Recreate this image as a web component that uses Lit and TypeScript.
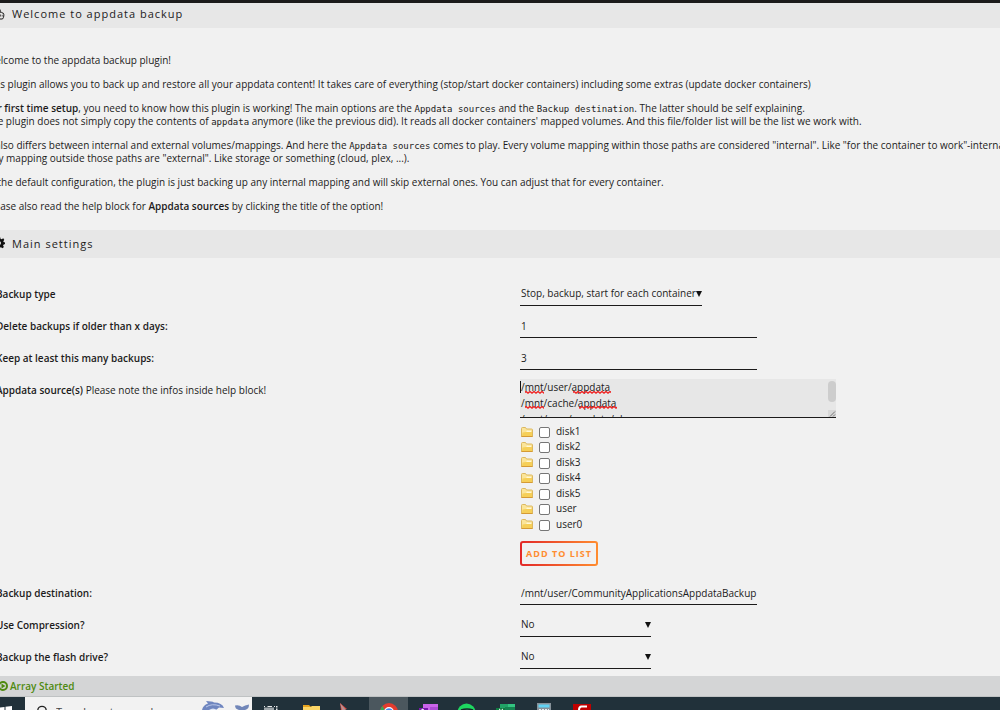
import { LitElement, html, svg, css } from "lit";
import { customElement } from "lit/decorators.js";

const FOLDERS = ["disk1", "disk2", "disk3", "disk4", "disk5", "user", "user0"];

const folderIcon = html`<svg class="folder" width="12" height="10" viewBox="0 0 12 10" aria-hidden="true">
  <path d="M.5 9.5V1.5Q.5.5 1.5.5H4.5L5.5 2H10.5Q11.5 2 11.5 3V9.5Z" fill="#fbe59a" stroke="#dcb85f" />
  <path d="M1 9L1.5 5.5L5 5L7 3.5H11V9Z" fill="#f6cf58" />
  <path d="M6 3.5H10.5V5H5Z" fill="#fff8d8" />
  <path d="M.5 9.5H11.5" stroke="#d59a35" />
</svg>`;

const thumbIcon = html`<svg width="12" height="12" viewBox="0 0 12 12" fill="none" stroke="#1c1b1b" aria-hidden="true">
  <path d="M3 5.5L5.5 3.5V1.5Q6.5.3 7.2 2V4.3Q8.500 3.900 9 4.800Q10.600 4.800 10.800 6.200V8Q10.500 10 9.500 11H5Q3.500 9 3 5.500Z" />
  <path d="M7.500 6.500V8.500M9.200 6.800V8.500" stroke-width=".7" />
</svg>`;

const gearIcon = html`<svg width="12" height="12" viewBox="0 0 11 11" aria-hidden="true">
  <path d="M4.500 0h2l.400 1.600 1 .400L9.400 1.200l.900 1.400L9.500 4l.200.600L11 5v1.500L9.600 7l-.400.800.800 1.400L8.700 10.200 7.300 9.400 6.500 9.600 6.200 11H4.500L4.200 9.500 3 9 1.600 9.900.700 8.700 1.500 7.300 0 6.500V4.600L1.500 4.200 2 3 1.200 1.600 2.500.800 3.900 1.600Z" fill="#111" />
  <circle cx="5.500" cy="5.500" r="1.800" fill="#e7e7e7" />
</svg>`;

const TASKS: { name: string; active?: boolean; art: unknown }[] = [
  { name: "Task View", art: svg`<path d="M12 10.500H22V13H12Z" fill="#9ea6aa"/><path d="M12.500 9V10M15.500 9.500H20M22.500 9V10" stroke="#e8eaeb" fill="none"/><path d="M24 9h1.500v1.500H24zM24 11.500h1.500V13H24z" fill="#e8eaeb"/>` },
  { name: "File Explorer", art: svg`<path d="M12 8H18L19.500 9.500H28V13H12Z" fill="#e6a21d"/><path d="M12 10H20L21 9H29V13H12Z" fill="#fbd566"/>` },
  { name: "Pointer tool", art: svg`<path d="M10 6L17 12 14 13H11Z" fill="#d9453e"/><path d="M10 6L16 13H12Z" fill="#aab2b5" opacity=".7"/>` },
  { name: "Chrome", active: true, art: svg`<circle cx="20" cy="15" r="9" fill="#e33b2e"/><path d="M11 14Q12 10 13.500 9L17 15H11Z" fill="#3ba655"/><circle cx="20" cy="15" r="5" fill="#fff"/><circle cx="20" cy="15" r="3.800" fill="#4384ef"/>` },
  { name: "OneNote", art: svg`<path d="M15 7H30V13H15Z" fill="#ca64ea"/><path d="M22 10H30V13H22Z" fill="#ad4bd5"/><path d="M11 11H20V13H11Z" fill="#7719aa"/><path d="M14 13v-1l2 1" stroke="#fff" fill="none"/>` },
  { name: "Spotify", art: svg`<circle cx="19.500" cy="15.500" r="9" fill="#1ed760"/><path d="M14 13Q20 11 26 13" stroke="#17232a" stroke-width="1.500" fill="none"/>` },
  { name: "Excel", art: svg`<path d="M14 7H22V13H14Z" fill="#21a366"/><path d="M22 7H29V13H22Z" fill="#33c481"/><path d="M19 10H29V13H19Z" fill="#168451"/><path d="M10 11H19V13H10Z" fill="#107c41"/><path d="M13 12l1.500 1M17 12l-1.500 1" stroke="#fff"/>` },
  { name: "Calculator", art: svg`<path d="M12 6H26V13H12Z" fill="#87929a"/><path d="M13.500 7.500H24.500V10.500H13.500Z" fill="#61d4f5"/><path d="M14 12.500H24" stroke="#e4eaed" stroke-dasharray="2 1"/>` },
  { name: "FileZilla", art: svg`<path d="M9 7H27V13H9Z" fill="#bf0000"/><path d="M15 13Q15 9.500 17.500 9.500H23" stroke="#fff" stroke-width="2" fill="none"/>` },
];

@customElement("app-root")
export class AppRoot extends LitElement {
  static styles = css`
    :host {
      display: grid;
      grid-template-rows: 3px minmax(0, 1fr) 21px 13px;
      height: 100vh;
      overflow: hidden;
      background: #f1f1f1;
      color: #1c1b1b;
      font: 10px/13px "Open Sans", "Noto Sans", sans-serif;
    }
    * { box-sizing: border-box; }
    .topbar { background: #1c1b1b; }
    main { overflow: hidden; }
    .title {
      display: flex;
      align-items: center;
      gap: 7px;
      height: 28px;
      margin: 0;
      padding-bottom: 2px;
      background: #e7e7e7;
      font-size: 11px;
      font-weight: 400;
      letter-spacing: 1px;
    }
    .title svg { flex: none; margin-left: -7px; }
    .title.first { height: 25px; padding-bottom: 4px; }
    .intro { margin: 26px 0 17px -14px; white-space: nowrap; }
    .intro p { margin: 0 0 11px; }
    .intro code { font: 9px/12px "DejaVu Sans Mono", monospace; }
    b, .label { font-weight: 600; }
    .settings { padding-top: 20px; }
    .row {
      display: grid;
      grid-template-columns: 52% 1fr;
      align-items: start;
      min-height: 32px;
    }
    .label { margin-left: -4px; line-height: 32px; }
    .label span { font-weight: 400; }
    input.text, select {
      display: block;
      height: 28px;
      margin: 0;
      padding: 4px 0 0 1px;
      border: 0;
      border-bottom: 1px solid #1c1b1b;
      border-radius: 0;
      outline: 0;
      background: transparent;
      color: inherit;
      font: inherit;
    }
    input.text { width: 237px; }
    select {
      width: 131px;
      appearance: none;
      background: url("data:image/svg+xml,%3Csvg xmlns='http://www.w3.org/2000/svg' width='6' height='6'%3E%3Cpath d='M0 0H6L3 6Z' fill='%23111'/%3E%3C/svg%3E") no-repeat right 0 top 13px;
    }
    select.wide { width: 182px; }
    .sources { padding-top: 5px; }
    .editor { position: relative; width: 316px; height: 39px; }
    textarea {
      display: block;
      width: 100%;
      height: 100%;
      padding: 0 0 0 1px;
      border: 0;
      border-bottom: 1px solid #1c1b1b;
      border-radius: 0;
      outline: 0;
      resize: none;
      overflow: hidden;
      background: #e7e7e7;
      color: inherit;
      font: inherit;
      line-height: 16px;
    }
    .marks { position: absolute; inset: 0; pointer-events: none; }
    .tree {
      display: grid;
      min-height: 108px;
      margin: 7px 0 0;
      padding: 0;
      list-style: none;
    }
    .tree label { display: flex; align-items: center; }
    .tree .folder { margin: 0 6px 0 1px; }
    .tree input {
      width: 11px;
      height: 11px;
      margin: 2px 6px 0 0;
      appearance: none;
      border: 1px solid #767676;
      border-radius: 2px;
      background: #fff;
    }
    .add {
      display: block;
      width: 78px;
      height: 25px;
      margin: 8px 0 11px;
      padding: 0;
      border: 2px solid transparent;
      border-radius: 3px;
      background:
        linear-gradient(#f1f1f1, #f1f1f1) padding-box,
        linear-gradient(90deg, #e22828, #ff8c2f) border-box;
      color: #ff8c2f;
      font: 700 9px/20px "Open Sans", sans-serif;
      letter-spacing: 1px;
      text-transform: uppercase;
    }
    .status {
      display: flex;
      align-items: center;
      gap: 2px;
      background: #d4d5d6;
      border-bottom: 1px solid #bfc2c3;
      color: #4f8a10;
      font-weight: 600;
    }
    .status svg { margin-left: -2px; }
    .taskbar { display: flex; overflow: hidden; background: #21313a; }
    .taskbar button { flex: none; width: 39px; height: 13px; padding: 0; border: 0; background: none; }
    .taskbar .start { width: 25px; }
    .taskbar .active { background: #4b575e; }
    .taskbar svg { display: block; }
    .search {
      display: flex;
      gap: 9px;
      width: 227px;
      padding-left: 12px;
      background: #f2f2f2;
      color: #444;
    }
    .search svg { flex: none; }
    .search input {
      width: 136px;
      height: 16px;
      margin-top: 7px;
      padding: 0;
      border: 0;
      background: none;
      font: 11px/16px "Open Sans", sans-serif;
    }
    .search input::placeholder { color: #444; opacity: 1; }
  `;

  render() {
    return html`
      <div class="topbar"></div>
      <main>
        <h2 class="title first">${thumbIcon}Welcome to appdata backup</h2>
        <section class="intro">
          <p>Welcome to the appdata backup plugin!</p>
          <p>This plugin allows you to back up and restore all your appdata content! It takes care of everything (stop/start docker containers) including some extras (update docker containers)</p>
          <p><b>For first time setup</b>, you need to know how this plugin is working! The main options are the <code>Appdata sources</code> and the <code>Backup destination</code>. The latter should be self explaining.<br>The plugin does not simply copy the contents of <code>appdata</code> anymore (like the previous did). It reads all docker containers' mapped volumes. And this file/folder list will be the list we work with.</p>
          <p>It also differs between internal and external volumes/mappings. And here the <code>Appdata sources</code> comes to play. Every volume mapping within those paths are considered "internal". Like "for the container to work"-internal.<br>Any mapping outside those paths are "external". Like storage or something (cloud, plex, ...).</p>
          <p>In the default configuration, the plugin is just backing up any internal mapping and will skip external ones. You can adjust that for every container.</p>
          <p>Please also read the help block for <b>Appdata sources</b> by clicking the title of the option!</p>
        </section>
        <h2 class="title">${gearIcon}Main settings</h2>
        <form class="settings">
          <div class="row">
            <label class="label" for="type">Backup type</label>
            <select id="type" class="wide"><option>Stop, backup, start for each container</option></select>
          </div>
          <div class="row">
            <label class="label" for="days">Delete backups if older than x days:</label>
            <input id="days" class="text" value="1">
          </div>
          <div class="row">
            <label class="label" for="keep">Keep at least this many backups:</label>
            <input id="keep" class="text" value="3">
          </div>
          <div class="row">
            <label class="label" for="sources">Appdata source(s) <span>Please note the infos inside help block!</span></label>
            <div class="sources">
              <div class="editor">
                <textarea id="sources" spellcheck="false" .value=${"/mnt/user/appdata\n/mnt/cache/appdata\n/mnt/user/appdata/plex"}></textarea>
                <svg class="marks" width="316" height="39" aria-hidden="true">
                  <defs><pattern id="wave" width="4" height="3" patternUnits="userSpaceOnUse"><path d="M-1 3L2 .5L5 3" fill="none" stroke="#f02020" stroke-width="1.300" /></pattern></defs>
                  <path d="M.5 2V14" stroke="#111" />
                  <path d="M5 12h19v3H5zM53 12h38v3H53z" fill="url(#wave)" />
                  <path d="M5 27h19v3H5zM59 27h38v3H59z" fill="url(#wave)" />
                  <rect x="308" y="2" width="8" height="21" rx="4" fill="#cdcdcd" />
                  <rect x="308" y="31" width="8" height="7" fill="#d8d8d8" />
                  <path d="M310 37.500L315 32.500M313 37.500L315 35.500" stroke="#777" />
                </svg>
              </div>
              <ul class="tree">
                ${FOLDERS.map((name) => html`<li><label>${folderIcon}<input type="checkbox">${name}</label></li>`)}
              </ul>
              <button type="button" class="add">Add to list</button>
            </div>
          </div>
          <div class="row">
            <label class="label" for="dest">Backup destination:</label>
            <input id="dest" class="text" value="/mnt/user/CommunityApplicationsAppdataBackup">
          </div>
          <div class="row">
            <label class="label" for="zip">Use Compression?</label>
            <select id="zip"><option>No</option></select>
          </div>
          <div class="row">
            <label class="label" for="flash">Backup the flash drive?</label>
            <select id="flash"><option>No</option></select>
          </div>
        </form>
      </main>
      <footer class="status">
        <svg width="10" height="10" viewBox="0 0 10 10" aria-hidden="true"><circle cx="5" cy="5" r="4" fill="none" stroke="#4f8a10" stroke-width="2" /><path d="M3.500 2.500L7.500 5L3.500 7.500Z" fill="#4f8a10" /></svg>
        Array Started
      </footer>
      <nav class="taskbar" aria-label="Taskbar">
        <button class="start" aria-label="Start">
          <svg width="25" height="13" viewBox="0 0 25 13"><path d="M0 10.500L4.500 10V13H0ZM5.500 9.800L12 9V13H5.500Z" fill="#fff" /></svg>
        </button>
        <div class="search">
          <svg width="10" height="13" viewBox="0 0 10 13" aria-hidden="true"><circle cx="5" cy="13.500" r="4.200" fill="none" stroke="#222" stroke-width="1.300" /></svg>
          <input placeholder="Type here to search" aria-label="Search">
          <svg width="52" height="13" viewBox="0 0 52 13" aria-hidden="true">
            <path d="M1 13Q2 8 7 6.500L5 4Q11 4 13 5.500Q21 5.500 23 11L18 10.500L15 13Z" fill="#6f86c0" />
            <path d="M5 10Q11 6 19 9" stroke="#b9c7e8" fill="none" />
            <path d="M8 13Q12 10 16 13Z" fill="#dfe6f5" />
            <path d="M34 8.500Q38 7.500 41 10Q44 8 48 7.500Q48 12 44 13H38Q34 12 34 8.500Z" fill="#7186b8" />
          </svg>
        </div>
        ${TASKS.map((t) => html`<button class=${t.active ? "active" : ""} aria-label=${t.name}><svg width="39" height="13" viewBox="0 0 39 13">${t.art}</svg></button>`)}
      </nav>
    `;
  }
}
